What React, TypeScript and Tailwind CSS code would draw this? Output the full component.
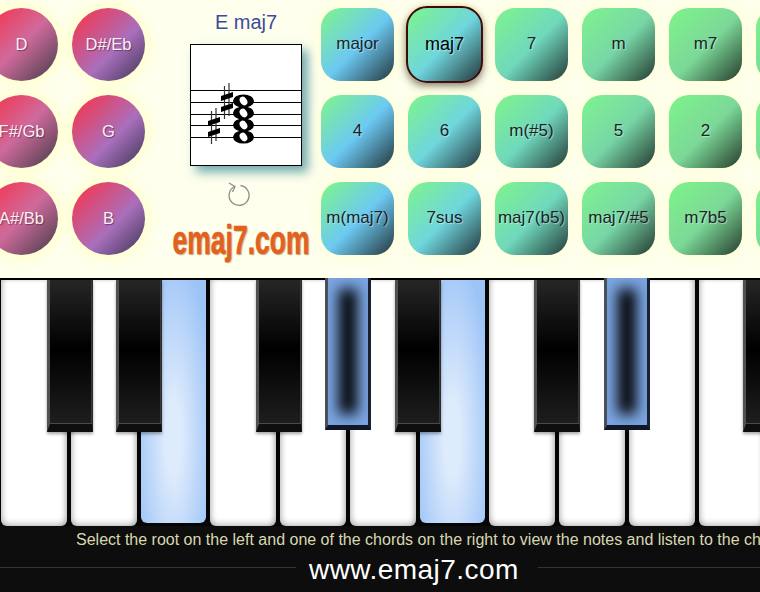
import React from 'react';

const roots = [
    { name: 'D', tone: 'bg-[linear-gradient(135deg,#f03a56_10%,#cf6a9c_50%,#51404f_94%)]' },
    { name: 'D#/Eb', tone: 'bg-[linear-gradient(135deg,#f03a56_10%,#a96fbc_58%,#4a3c60_94%)]' },
    { name: 'F#/Gb', tone: 'bg-[linear-gradient(135deg,#f03a56_10%,#cf6a9c_50%,#51404f_94%)]' },
    { name: 'G', tone: 'bg-[linear-gradient(135deg,#f03a56_10%,#a96fbc_58%,#4a3c60_94%)]' },
    { name: 'A#/Bb', tone: 'bg-[linear-gradient(135deg,#f03a56_10%,#cf6a9c_50%,#51404f_94%)]' },
    { name: 'B', tone: 'bg-[linear-gradient(135deg,#f03a56_10%,#a96fbc_58%,#4a3c60_94%)]' },
];

const tones = [
    'bg-[linear-gradient(135deg,#7df290_4%,#6cc9f2_52%,#24363c_100%)]',
    'bg-[linear-gradient(135deg,#7df290_4%,#6fd6dc_52%,#24363c_100%)]',
    'bg-[linear-gradient(135deg,#7df290_4%,#70d8bc_52%,#243a38_100%)]',
    'bg-[linear-gradient(135deg,#7df290_4%,#78d6a6_52%,#243a30_100%)]',
    'bg-[linear-gradient(135deg,#7df28a_4%,#7cd898_52%,#263c2c_100%)]',
    'bg-[linear-gradient(135deg,#7df28a_4%,#7cd898_52%,#263c2c_100%)]',
];

const chords = [
    'major', 'maj7', '7', 'm', 'm7', '',
    '4', '6', 'm(#5)', '5', '2', '',
    'm(maj7)', '7sus', 'maj7(b5)', 'maj7/#5', 'm7b5', '',
];

const whiteKeys = [false, false, true, false, false, false, true, false, false, false, false];

const blackKeys = [
    { pos: 'left-[47px]', active: false },
    { pos: 'left-[116px]', active: false },
    { pos: 'left-[256px]', active: false },
    { pos: 'left-[325px]', active: true },
    { pos: 'left-[395px]', active: false },
    { pos: 'left-[534px]', active: false },
    { pos: 'left-[604px]', active: true },
    { pos: 'left-[743px]', active: false },
];

const Sharp = ({ x, y }: { x: number; y: number }) => (
    <g>
        <path d={`M${x - 2.5} ${y - 15}V${y + 18}M${x + 2} ${y - 18}V${y + 15}`} stroke="#333" strokeWidth="1.2" />
        <path d={`M${x - 6} ${y - 5}L${x + 6} ${y - 9}V${y - 4}L${x - 6} ${y}Z`} fill="#000" />
        <path d={`M${x - 6} ${y + 6}L${x + 6} ${y + 2}V${y + 7}L${x - 6} ${y + 11}Z`} fill="#000" />
    </g>
);

const Note = ({ y }: { y: number }) => (
    <g>
        <ellipse cx="52.5" cy={y} rx="10.5" ry="6.6" fill="#000" />
        <ellipse cx="52.5" cy={y} rx="3.4" ry="4.6" fill="#fff" transform={`rotate(-35 52.5 ${y})`} />
    </g>
);

const Staff = () => (
    <div className="w-[112px] h-[122px] mt-[10px] bg-white border border-black shadow-[6px_6px_10px_#6fa9ad]">
        <svg width="110" height="120" viewBox="0 0 110 120">
            {[45, 57, 69, 80, 92].map((y) => (
                <line key={y} x1="0" x2="110" y1={y + 0.5} y2={y + 0.5} stroke="#000" strokeWidth="1" />
            ))}
            <Sharp x={36} y={56} />
            <Sharp x={23} y={81} />
            <Note y={56} />
            <Note y={68} />
            <Note y={80} />
            <Note y={92} />
        </svg>
    </div>
);

const App: React.FC = () => {
    return (
        <div className="w-[760px] h-[592px] overflow-hidden bg-[#0d0d0d] font-['Liberation_Sans',Arial,sans-serif]">
            <div className="flex h-[278px] bg-[#feffec] overflow-hidden">
                <div className="grid grid-cols-[73px_73px] auto-rows-[73px] gap-[14px] shrink-0 -ml-[15px] mt-[8px]">
                    {roots.map((r) => (
                        <div
                            key={r.name}
                            className={`flex items-center justify-center rounded-full text-[16.5px] whitespace-nowrap text-[#fdeef5] [text-shadow:1px_1px_1px_rgba(60,20,40,0.5)] shadow-[0_0_10px_6px_#ffffd2] ${r.tone}`}
                        >
                            {r.name}
                        </div>
                    ))}
                </div>

                <div className="flex flex-col items-center w-[146px] shrink-0 ml-[28px]">
                    <div className="mt-[10px] text-[20px] leading-[24px] text-[#3f4a9c]">E maj7</div>
                    <Staff />
                    <svg className="mt-[15px] mr-[15px]" width="26" height="26" viewBox="0 0 26 26" fill="none" stroke="#8a8f8a" strokeWidth="1.3">
                        <path d="M8.5 5.5A10 10 0 1 0 14.5 4.5" />
                        <path d="M3 2L9 5.5L6.5 11" />
                    </svg>
                    <div className="mt-[15px] mr-[10px] text-[26.5px] leading-[36px] font-bold whitespace-nowrap text-[#e2611f] scale-y-[1.5] [-webkit-text-stroke:0.4px_#e2611f] [text-shadow:1px_1px_1px_#b8a88c]">
                        emaj7.com
                    </div>
                </div>

                <div className="grid grid-cols-[repeat(6,73px)] auto-rows-[73px] gap-[14px] shrink-0 ml-[2px] mt-[8px]">
                    {chords.map((c, i) =>
                        c === 'maj7' ? (
                            <div
                                key={i}
                                className={`-m-[2px] flex items-center justify-center rounded-[21px] border-2 border-[#3d0a10] text-[18px] text-black [text-shadow:1px_1px_1px_rgba(255,255,255,0.5)] shadow-[0_4px_8px_rgba(0,0,0,0.45),0_0_6px_#ffe9a0] ${tones[i % 6]}`}
                            >
                                {c}
                            </div>
                        ) : (
                            <div
                                key={i}
                                className={`flex items-center justify-center pb-[2px] rounded-[20px] text-[17px] whitespace-nowrap text-[#1c2426] [text-shadow:1px_1px_1px_rgba(255,255,255,0.45)] shadow-[0_0_10px_4px_#ffffdc] ${tones[i % 6]}`}
                            >
                                {c}
                            </div>
                        )
                    )}
                </div>
            </div>

            <div className="relative h-[248px] border-t-2 border-black bg-[#050505]">
                <div className="flex gap-[4px] pl-[1px]">
                    {whiteKeys.map((active, i) =>
                        active ? (
                            <div
                                key={i}
                                className="w-[65.75px] h-[243px] shrink-0 rounded-b-[6px] bg-[radial-gradient(ellipse_62%_75%_at_50%_65%,#deebfc_20%,#9dc4f7_100%)]"
                            />
                        ) : (
                            <div
                                key={i}
                                className="w-[65.75px] h-[246px] shrink-0 rounded-b-[6px] bg-white shadow-[inset_0_-3px_6px_rgba(0,0,0,0.18),inset_4px_0_6px_-3px_rgba(0,0,0,0.2),inset_-4px_0_6px_-3px_rgba(0,0,0,0.25)]"
                            />
                        )
                    )}
                </div>
                {blackKeys.map((k) =>
                    k.active ? (
                        <div
                            key={k.pos}
                            className={`absolute top-[-2px] ${k.pos} w-[46px] h-[152px] border-l-[3px] border-r-[3px] border-b-[5px] border-l-[#4a5058] border-r-[#1a2030] border-b-[#101828] bg-black shadow-[inset_0_0_14px_11px_#7ba5e2]`}
                        />
                    ) : (
                        <div
                            key={k.pos}
                            className={`absolute top-0 ${k.pos} w-[45.5px] h-[152px] border-l-[3px] border-r-[1px] border-b-[8px] border-l-[#505050] border-r-[#2c2c2c] border-b-[#0e0e0e] bg-[linear-gradient(180deg,#262626_0%,#000_48%,#1e1e1e_100%)] shadow-[inset_0_-1px_0_#4a4a4a,inset_-1px_0_0_#3a3a3a,0_2px_3px_rgba(0,0,0,0.35)]`}
                        />
                    )
                )}
            </div>

            <div className="h-[26px] pt-[1px] pl-[76px] text-[16px] leading-[26px] whitespace-nowrap overflow-hidden text-[#d8d8b0]">
                Select the root on the left and one of the chords on the right to view the notes and listen to the chord
            </div>
            <div className="flex items-center h-[40px] -mt-[2px]">
                <div className="w-[296px] h-px bg-[#333] shrink-0 -mt-[5px]" />
                <div className="w-[242px] pl-[13px] shrink-0 text-[28px] leading-[32px] tracking-[0.45px] text-white">www.emaj7.com</div>
                <div className="flex-1 h-px bg-[#333] -mt-[5px]" />
            </div>
        </div>
    );
};

export default App;
